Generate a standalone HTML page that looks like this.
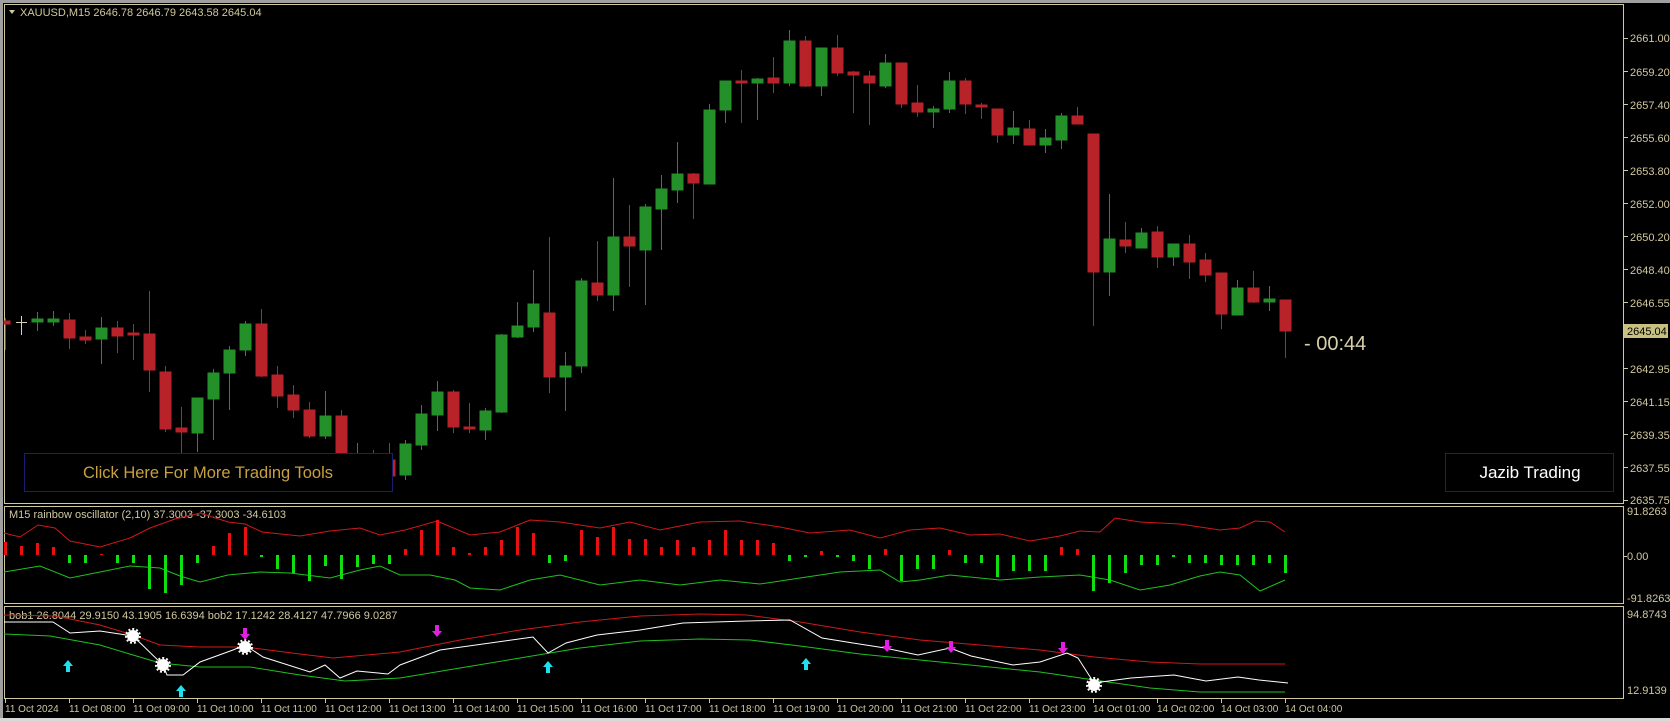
<!DOCTYPE html>
<html><head><meta charset="utf-8"><style>
html,body{margin:0;padding:0;background:#000;width:1670px;height:721px;overflow:hidden}
svg{display:block}
text{font-family:"Liberation Sans",sans-serif}
</style></head><body>
<svg width="1670" height="721" xmlns="http://www.w3.org/2000/svg">
<rect width="1670" height="721" fill="#000"/>
<rect x="0" y="0" width="1670" height="3" fill="#a0a0a0"/>
<rect x="0" y="0" width="3" height="721" fill="#a0a0a0"/>
<rect x="0" y="718" width="1670" height="3" fill="#d8d8d8"/>
<g fill="none" stroke="#d0c8a0" stroke-width="1">
<rect x="4.5" y="4.5" width="1619" height="499"/>
<rect x="4.5" y="506.5" width="1619" height="97"/>
<rect x="4.5" y="606.5" width="1619" height="92"/>
</g>
<path d="M9 10 L15 10 L12 14 Z" fill="#d0c8a0"/>
<text x="20" y="16" font-size="11" fill="#d0c8a0">XAUUSD,M15  2646.78 2646.79 2643.58 2645.04</text>
<g stroke-width="1">
<g stroke="#b8232a" fill="#b8232a">
<line x1="5.5" y1="318" x2="5.5" y2="350"/><rect x="4" y="321" width="6" height="3"/>
<line x1="69.5" y1="313" x2="69.5" y2="349"/><rect x="64" y="320" width="11" height="18"/>
<line x1="85.5" y1="330" x2="85.5" y2="344"/><rect x="80" y="337" width="11" height="3"/>
<line x1="117.5" y1="321" x2="117.5" y2="353"/><rect x="112" y="328" width="11" height="8"/>
<line x1="133.5" y1="324" x2="133.5" y2="360"/><rect x="128" y="333" width="11" height="2"/>
<line x1="149.5" y1="291" x2="149.5" y2="392"/><rect x="144" y="334" width="11" height="36"/>
<line x1="165.5" y1="366" x2="165.5" y2="432"/><rect x="160" y="372" width="11" height="57"/>
<line x1="181.5" y1="407" x2="181.5" y2="453"/><rect x="176" y="428" width="11" height="4"/>
<line x1="261.5" y1="309" x2="261.5" y2="377"/><rect x="256" y="324" width="11" height="52"/>
<line x1="277.5" y1="366" x2="277.5" y2="408"/><rect x="272" y="375" width="11" height="21"/>
<line x1="293.5" y1="385" x2="293.5" y2="418"/><rect x="288" y="395" width="11" height="15"/>
<line x1="309.5" y1="402" x2="309.5" y2="438"/><rect x="304" y="410" width="11" height="26"/>
<line x1="341.5" y1="410" x2="341.5" y2="480"/><rect x="336" y="416" width="11" height="54"/>
<line x1="373.5" y1="450" x2="373.5" y2="490"/><rect x="368" y="455" width="11" height="23"/>
<line x1="389.5" y1="443" x2="389.5" y2="480"/><rect x="384" y="460" width="11" height="16"/>
<line x1="453.5" y1="390" x2="453.5" y2="433"/><rect x="448" y="392" width="11" height="35"/>
<line x1="469.5" y1="403" x2="469.5" y2="433"/><rect x="464" y="427" width="11" height="2"/>
<line x1="549.5" y1="237" x2="549.5" y2="393"/><rect x="544" y="313" width="11" height="64"/>
<line x1="597.5" y1="241" x2="597.5" y2="301"/><rect x="592" y="283" width="11" height="12"/>
<line x1="629.5" y1="205" x2="629.5" y2="287"/><rect x="624" y="237" width="11" height="9"/>
<line x1="693.5" y1="173" x2="693.5" y2="219"/><rect x="688" y="174" width="11" height="9"/>
<line x1="741.5" y1="70" x2="741.5" y2="123"/><rect x="736" y="81" width="11" height="2"/>
<line x1="773.5" y1="57" x2="773.5" y2="93"/><rect x="768" y="78" width="11" height="5"/>
<line x1="805.5" y1="36" x2="805.5" y2="87"/><rect x="800" y="41" width="11" height="45"/>
<line x1="837.5" y1="35" x2="837.5" y2="76"/><rect x="832" y="48" width="11" height="25"/>
<line x1="853.5" y1="71" x2="853.5" y2="113"/><rect x="848" y="72" width="11" height="3"/>
<line x1="869.5" y1="71" x2="869.5" y2="125"/><rect x="864" y="76" width="11" height="7"/>
<line x1="901.5" y1="63" x2="901.5" y2="108"/><rect x="896" y="63" width="11" height="41"/>
<line x1="917.5" y1="85" x2="917.5" y2="117"/><rect x="912" y="103" width="11" height="9"/>
<line x1="965.5" y1="78" x2="965.5" y2="114"/><rect x="960" y="81" width="11" height="23"/>
<line x1="981.5" y1="103" x2="981.5" y2="119"/><rect x="976" y="105" width="11" height="2"/>
<line x1="997.5" y1="109" x2="997.5" y2="143"/><rect x="992" y="109" width="11" height="26"/>
<line x1="1029.5" y1="120" x2="1029.5" y2="145"/><rect x="1024" y="129" width="11" height="16"/>
<line x1="1077.5" y1="107" x2="1077.5" y2="124"/><rect x="1072" y="116" width="11" height="8"/>
<line x1="1093.5" y1="134" x2="1093.5" y2="326"/><rect x="1088" y="134" width="11" height="138"/>
<line x1="1125.5" y1="222" x2="1125.5" y2="253"/><rect x="1120" y="240" width="11" height="6"/>
<line x1="1157.5" y1="226" x2="1157.5" y2="268"/><rect x="1152" y="232" width="11" height="25"/>
<line x1="1189.5" y1="235" x2="1189.5" y2="279"/><rect x="1184" y="244" width="11" height="18"/>
<line x1="1205.5" y1="253" x2="1205.5" y2="282"/><rect x="1200" y="260" width="11" height="15"/>
<line x1="1221.5" y1="273" x2="1221.5" y2="329"/><rect x="1216" y="273" width="11" height="41"/>
<line x1="1253.5" y1="271" x2="1253.5" y2="303"/><rect x="1248" y="288" width="11" height="14"/>
<line x1="1285.5" y1="300" x2="1285.5" y2="358"/><rect x="1280" y="300" width="11" height="31"/>
</g>
<g stroke="#23902a" fill="#23902a">
<line x1="37.5" y1="312" x2="37.5" y2="331"/><rect x="32" y="319" width="11" height="3"/>
<line x1="53.5" y1="311" x2="53.5" y2="326"/><rect x="48" y="319" width="11" height="3"/>
<line x1="101.5" y1="317" x2="101.5" y2="364"/><rect x="96" y="328" width="11" height="11"/>
<line x1="197.5" y1="398" x2="197.5" y2="452"/><rect x="192" y="398" width="11" height="35"/>
<line x1="213.5" y1="369" x2="213.5" y2="440"/><rect x="208" y="373" width="11" height="26"/>
<line x1="229.5" y1="346" x2="229.5" y2="410"/><rect x="224" y="350" width="11" height="23"/>
<line x1="245.5" y1="321" x2="245.5" y2="356"/><rect x="240" y="324" width="11" height="26"/>
<line x1="325.5" y1="391" x2="325.5" y2="439"/><rect x="320" y="416" width="11" height="20"/>
<line x1="357.5" y1="443" x2="357.5" y2="485"/><rect x="352" y="460" width="11" height="15"/>
<line x1="405.5" y1="440" x2="405.5" y2="480"/><rect x="400" y="444" width="11" height="31"/>
<line x1="421.5" y1="405" x2="421.5" y2="450"/><rect x="416" y="414" width="11" height="31"/>
<line x1="437.5" y1="381" x2="437.5" y2="431"/><rect x="432" y="392" width="11" height="23"/>
<line x1="485.5" y1="408" x2="485.5" y2="440"/><rect x="480" y="411" width="11" height="19"/>
<line x1="501.5" y1="334" x2="501.5" y2="413"/><rect x="496" y="335" width="11" height="77"/>
<line x1="517.5" y1="302" x2="517.5" y2="338"/><rect x="512" y="326" width="11" height="11"/>
<line x1="533.5" y1="270" x2="533.5" y2="332"/><rect x="528" y="304" width="11" height="23"/>
<line x1="565.5" y1="352" x2="565.5" y2="411"/><rect x="560" y="366" width="11" height="11"/>
<line x1="581.5" y1="278" x2="581.5" y2="373"/><rect x="576" y="281" width="11" height="85"/>
<line x1="613.5" y1="178" x2="613.5" y2="311"/><rect x="608" y="237" width="11" height="58"/>
<line x1="645.5" y1="204" x2="645.5" y2="305"/><rect x="640" y="207" width="11" height="43"/>
<line x1="661.5" y1="175" x2="661.5" y2="250"/><rect x="656" y="189" width="11" height="20"/>
<line x1="677.5" y1="142" x2="677.5" y2="203"/><rect x="672" y="174" width="11" height="16"/>
<line x1="709.5" y1="104" x2="709.5" y2="184"/><rect x="704" y="110" width="11" height="74"/>
<line x1="725.5" y1="81" x2="725.5" y2="123"/><rect x="720" y="81" width="11" height="29"/>
<line x1="757.5" y1="78" x2="757.5" y2="120"/><rect x="752" y="79" width="11" height="4"/>
<line x1="789.5" y1="30" x2="789.5" y2="86"/><rect x="784" y="41" width="11" height="42"/>
<line x1="821.5" y1="48" x2="821.5" y2="96"/><rect x="816" y="48" width="11" height="38"/>
<line x1="885.5" y1="54" x2="885.5" y2="88"/><rect x="880" y="63" width="11" height="23"/>
<line x1="933.5" y1="106" x2="933.5" y2="128"/><rect x="928" y="109" width="11" height="3"/>
<line x1="949.5" y1="72" x2="949.5" y2="113"/><rect x="944" y="81" width="11" height="28"/>
<line x1="1013.5" y1="111" x2="1013.5" y2="144"/><rect x="1008" y="128" width="11" height="7"/>
<line x1="1045.5" y1="129" x2="1045.5" y2="153"/><rect x="1040" y="138" width="11" height="7"/>
<line x1="1061.5" y1="113" x2="1061.5" y2="149"/><rect x="1056" y="116" width="11" height="24"/>
<line x1="1109.5" y1="194" x2="1109.5" y2="296"/><rect x="1104" y="239" width="11" height="33"/>
<line x1="1141.5" y1="228" x2="1141.5" y2="248"/><rect x="1136" y="233" width="11" height="15"/>
<line x1="1173.5" y1="244" x2="1173.5" y2="266"/><rect x="1168" y="244" width="11" height="13"/>
<line x1="1237.5" y1="280" x2="1237.5" y2="315"/><rect x="1232" y="288" width="11" height="27"/>
<line x1="1269.5" y1="286" x2="1269.5" y2="311"/><rect x="1264" y="299" width="11" height="3"/>
</g>
<g stroke="#d8d0b0"><line x1="21.5" y1="316" x2="21.5" y2="335"/><line x1="16" y1="322.5" x2="27" y2="322.5"/></g>
</g>
<rect x="24.5" y="453.5" width="368" height="38" fill="#000" stroke="#1c1c70"/>
<text x="208" y="478" font-size="16.5" fill="#c8a040" text-anchor="middle">Click Here For More Trading Tools</text>
<rect x="1445.5" y="453.5" width="168" height="38" fill="#000" stroke="#1c1c70"/>
<text x="1530" y="478" font-size="17" fill="#ffffff" text-anchor="middle">Jazib Trading</text>
<text x="1304" y="350" font-size="20" fill="#d8d0a8">- 00:44</text>
<g font-size="11" fill="#d0c8a0">
<text x="1630" y="42">2661.00</text><text x="1630" y="76">2659.20</text><text x="1630" y="109">2657.40</text>
<text x="1630" y="142">2655.60</text><text x="1630" y="175">2653.80</text><text x="1630" y="208">2652.00</text>
<text x="1630" y="241">2650.20</text><text x="1630" y="274">2648.40</text><text x="1630" y="307">2646.55</text>
<text x="1630" y="373">2642.95</text><text x="1630" y="406">2641.15</text><text x="1630" y="439">2639.35</text>
<text x="1630" y="472">2637.55</text><text x="1630" y="504">2635.75</text>
<text x="1627" y="515">91.8263</text><text x="1627" y="560">0.00</text><text x="1627" y="602">-91.8263</text>
<text x="1627" y="618">94.8743</text><text x="1627" y="694">12.9139</text>
</g>
<g stroke="#d0c8a0"><path d="M1624 38.5h4M1624 71.5h4M1624 104.5h4M1624 137.5h4M1624 170.5h4M1624 203.5h4M1624 236.5h4M1624 269.5h4M1624 302.5h4M1624 368.5h4M1624 401.5h4M1624 434.5h4M1624 467.5h4M1624 500.5h4M1624 556.5h3"/></g>
<rect x="1624" y="324" width="44" height="14" fill="#c8c080"/>
<text x="1627" y="335" font-size="11" fill="#000">2645.04</text>
<text x="9" y="518" font-size="11" fill="#d0c8a0">M15 rainbow oscillator (2,10) 37.3003 -37.3003 -34.6103</text>
<polyline fill="none" stroke="#d01818" points="4,533 20,537 38,525 55,528 70,541 100,547 130,538 150,528 175,519 200,513 228,522 245,524 262,532 300,536 330,531 360,528 380,535 405,530 437,521 470,535 500,532 530,520 560,522 600,528 630,522 660,530 700,522 740,521 780,527 810,533 850,530 880,538 910,530 940,528 970,535 1000,534 1030,541 1060,536 1080,531 1100,532 1115,518 1140,522 1180,524 1220,530 1240,528 1255,521 1270,522 1285,532"/>
<polyline fill="none" stroke="#20c020" points="4,572 40,566 70,578 100,572 130,566 160,568 180,576 200,582 228,575 260,572 290,573 330,578 360,570 380,566 400,575 430,575 455,580 470,588 500,590 530,580 560,575 600,585 640,580 680,585 720,580 760,584 800,578 840,572 880,570 900,582 920,580 950,575 980,578 1000,580 1040,577 1080,575 1110,580 1140,590 1170,585 1200,576 1220,572 1240,575 1260,591 1285,580"/>
<g fill="#e81010">
<rect x="4" y="542" width="3" height="13"/><rect x="20" y="546" width="3" height="9"/><rect x="36" y="543" width="3" height="12"/><rect x="52" y="547" width="3" height="8"/>
<rect x="100" y="554" width="3" height="1"/><rect x="212" y="546" width="3" height="9"/><rect x="228" y="533" width="3" height="22"/><rect x="244" y="527" width="3" height="28"/>
<rect x="404" y="549" width="3" height="6"/><rect x="420" y="530" width="3" height="25"/><rect x="436" y="520" width="3" height="35"/><rect x="452" y="547" width="3" height="8"/><rect x="468" y="553" width="3" height="2"/><rect x="484" y="547" width="3" height="8"/><rect x="500" y="540" width="3" height="15"/><rect x="516" y="527" width="3" height="28"/><rect x="532" y="533" width="3" height="22"/>
<rect x="580" y="530" width="3" height="25"/><rect x="596" y="537" width="3" height="18"/><rect x="612" y="527" width="3" height="28"/><rect x="628" y="539" width="3" height="16"/><rect x="644" y="539" width="3" height="16"/><rect x="660" y="547" width="3" height="8"/><rect x="676" y="540" width="3" height="15"/><rect x="692" y="547" width="3" height="8"/><rect x="708" y="540" width="3" height="15"/><rect x="724" y="530" width="3" height="25"/><rect x="740" y="540" width="3" height="15"/><rect x="756" y="540" width="3" height="15"/><rect x="772" y="543" width="3" height="12"/>
<rect x="820" y="551" width="3" height="4"/><rect x="884" y="549" width="3" height="6"/><rect x="948" y="550" width="3" height="5"/><rect x="1060" y="547" width="3" height="8"/><rect x="1076" y="549" width="3" height="6"/>
</g>
<g fill="#10e010">
<rect x="68" y="555" width="3" height="8"/><rect x="84" y="555" width="3" height="8"/><rect x="116" y="555" width="3" height="8"/><rect x="132" y="555" width="3" height="8"/><rect x="148" y="555" width="3" height="34"/><rect x="164" y="555" width="3" height="38"/><rect x="180" y="555" width="3" height="30"/><rect x="196" y="555" width="3" height="8"/>
<rect x="260" y="555" width="3" height="2"/><rect x="276" y="555" width="3" height="14"/><rect x="292" y="555" width="3" height="18"/><rect x="308" y="555" width="3" height="26"/><rect x="324" y="555" width="3" height="11"/><rect x="340" y="555" width="3" height="24"/><rect x="356" y="555" width="3" height="12"/><rect x="372" y="555" width="3" height="9"/><rect x="388" y="555" width="3" height="9"/>
<rect x="548" y="555" width="3" height="8"/><rect x="564" y="555" width="3" height="6"/>
<rect x="788" y="555" width="3" height="6"/><rect x="804" y="555" width="3" height="2"/><rect x="836" y="555" width="3" height="2"/><rect x="852" y="555" width="3" height="6"/><rect x="868" y="555" width="3" height="14"/><rect x="900" y="555" width="3" height="26"/><rect x="916" y="555" width="3" height="14"/><rect x="932" y="555" width="3" height="14"/><rect x="964" y="555" width="3" height="8"/><rect x="980" y="555" width="3" height="8"/><rect x="996" y="555" width="3" height="22"/><rect x="1012" y="555" width="3" height="16"/><rect x="1028" y="555" width="3" height="16"/><rect x="1044" y="555" width="3" height="16"/>
<rect x="1092" y="555" width="3" height="36"/><rect x="1108" y="555" width="3" height="28"/><rect x="1124" y="555" width="3" height="18"/><rect x="1140" y="555" width="3" height="10"/><rect x="1156" y="555" width="3" height="10"/><rect x="1172" y="555" width="3" height="2"/><rect x="1188" y="555" width="3" height="8"/><rect x="1204" y="555" width="3" height="8"/><rect x="1220" y="555" width="3" height="10"/><rect x="1236" y="555" width="3" height="10"/><rect x="1252" y="555" width="3" height="10"/><rect x="1268" y="555" width="3" height="8"/><rect x="1284" y="555" width="3" height="18"/>
</g>
<text x="9" y="619" font-size="11" fill="#d0c8a0">bob1 26.8044 29.9150 43.1905 16.6394  bob2 17.1242 28.4127 47.7966 9.0287</text>
<polyline fill="none" stroke="#d01818" points="4,615 55,616 100,625 133,635 160,645 200,647 245,647 300,654 333,658 400,652 460,640 520,630 580,622 640,616 700,614 747,615 800,622 860,632 920,640 980,645 1040,650 1094,657 1150,662 1200,664 1285,664"/>
<polyline fill="none" stroke="#20c020" points="4,634 50,636 100,645 133,655 160,663 200,667 250,667 300,675 345,681 400,678 460,668 520,658 580,648 640,641 700,639 750,640 800,646 860,654 920,660 980,666 1040,672 1094,680 1150,688 1200,692 1285,692"/>
<polyline fill="none" stroke="#ffffff" points="4,622 53,622 70,633 100,631 133,636 163,665 167,675 183,675 200,662 233,650 245,645 263,657 310,672 325,665 340,678 357,671 388,674 400,665 440,650 533,637 548,653 566,643 597,635 640,630 683,623 747,621 790,620 822,638 853,643 885,648 918,655 950,648 971,656 1013,665 1040,662 1067,653 1078,658 1094,683 1131,678 1174,675 1206,681 1238,677 1259,680 1288,683"/>
<g fill="#ffffff">
<circle cx="133" cy="636" r="6"/><circle cx="163" cy="665" r="6"/><circle cx="245" cy="647" r="6"/><circle cx="1094" cy="685" r="6"/>
<g stroke="#ffffff" stroke-width="2" stroke-dasharray="2 2" fill="none">
<circle cx="133" cy="636" r="7"/><circle cx="163" cy="665" r="7"/><circle cx="245" cy="647" r="7"/><circle cx="1094" cy="685" r="7"/>
</g>
</g>
<g fill="#e020e0">
<path d="M243 628h4v6h3l-5 6l-5-6h3z"/><path d="M435 625h4v6h3l-5 6l-5-6h3z"/><path d="M885 640h4v6h3l-5 6l-5-6h3z"/><path d="M949 641h4v6h3l-5 6l-5-6h3z"/><path d="M1061 642h4v6h3l-5 6l-5-6h3z"/>
</g>
<g fill="#20e0f0">
<path d="M66 672h4v-6h3l-5-6l-5 6h3z"/><path d="M179 697h4v-6h3l-5-6l-5 6h3z"/><path d="M546 673h4v-6h3l-5-6l-5 6h3z"/><path d="M804 670h4v-6h3l-5-6l-5 6h3z"/>
</g>
<g stroke="#d0c8a0"><path d="M5.5 699v4M69.5 699v4M133.5 699v4M197.5 699v4M261.5 699v4M325.5 699v4M389.5 699v4M453.5 699v4M517.5 699v4M581.5 699v4M645.5 699v4M709.5 699v4M773.5 699v4M837.5 699v4M901.5 699v4M965.5 699v4M1029.5 699v4M1093.5 699v4M1157.5 699v4M1221.5 699v4M1285.5 699v4"/></g>
<g font-size="10" fill="#d0c8a0">
<text x="5" y="712">11 Oct 2024</text><text x="69" y="712">11 Oct 08:00</text><text x="133" y="712">11 Oct 09:00</text><text x="197" y="712">11 Oct 10:00</text><text x="261" y="712">11 Oct 11:00</text><text x="325" y="712">11 Oct 12:00</text><text x="389" y="712">11 Oct 13:00</text><text x="453" y="712">11 Oct 14:00</text><text x="517" y="712">11 Oct 15:00</text><text x="581" y="712">11 Oct 16:00</text><text x="645" y="712">11 Oct 17:00</text><text x="709" y="712">11 Oct 18:00</text><text x="773" y="712">11 Oct 19:00</text><text x="837" y="712">11 Oct 20:00</text><text x="901" y="712">11 Oct 21:00</text><text x="965" y="712">11 Oct 22:00</text><text x="1029" y="712">11 Oct 23:00</text><text x="1093" y="712">14 Oct 01:00</text><text x="1157" y="712">14 Oct 02:00</text><text x="1221" y="712">14 Oct 03:00</text><text x="1285" y="712">14 Oct 04:00</text>
</g>
</svg>
</body></html>
